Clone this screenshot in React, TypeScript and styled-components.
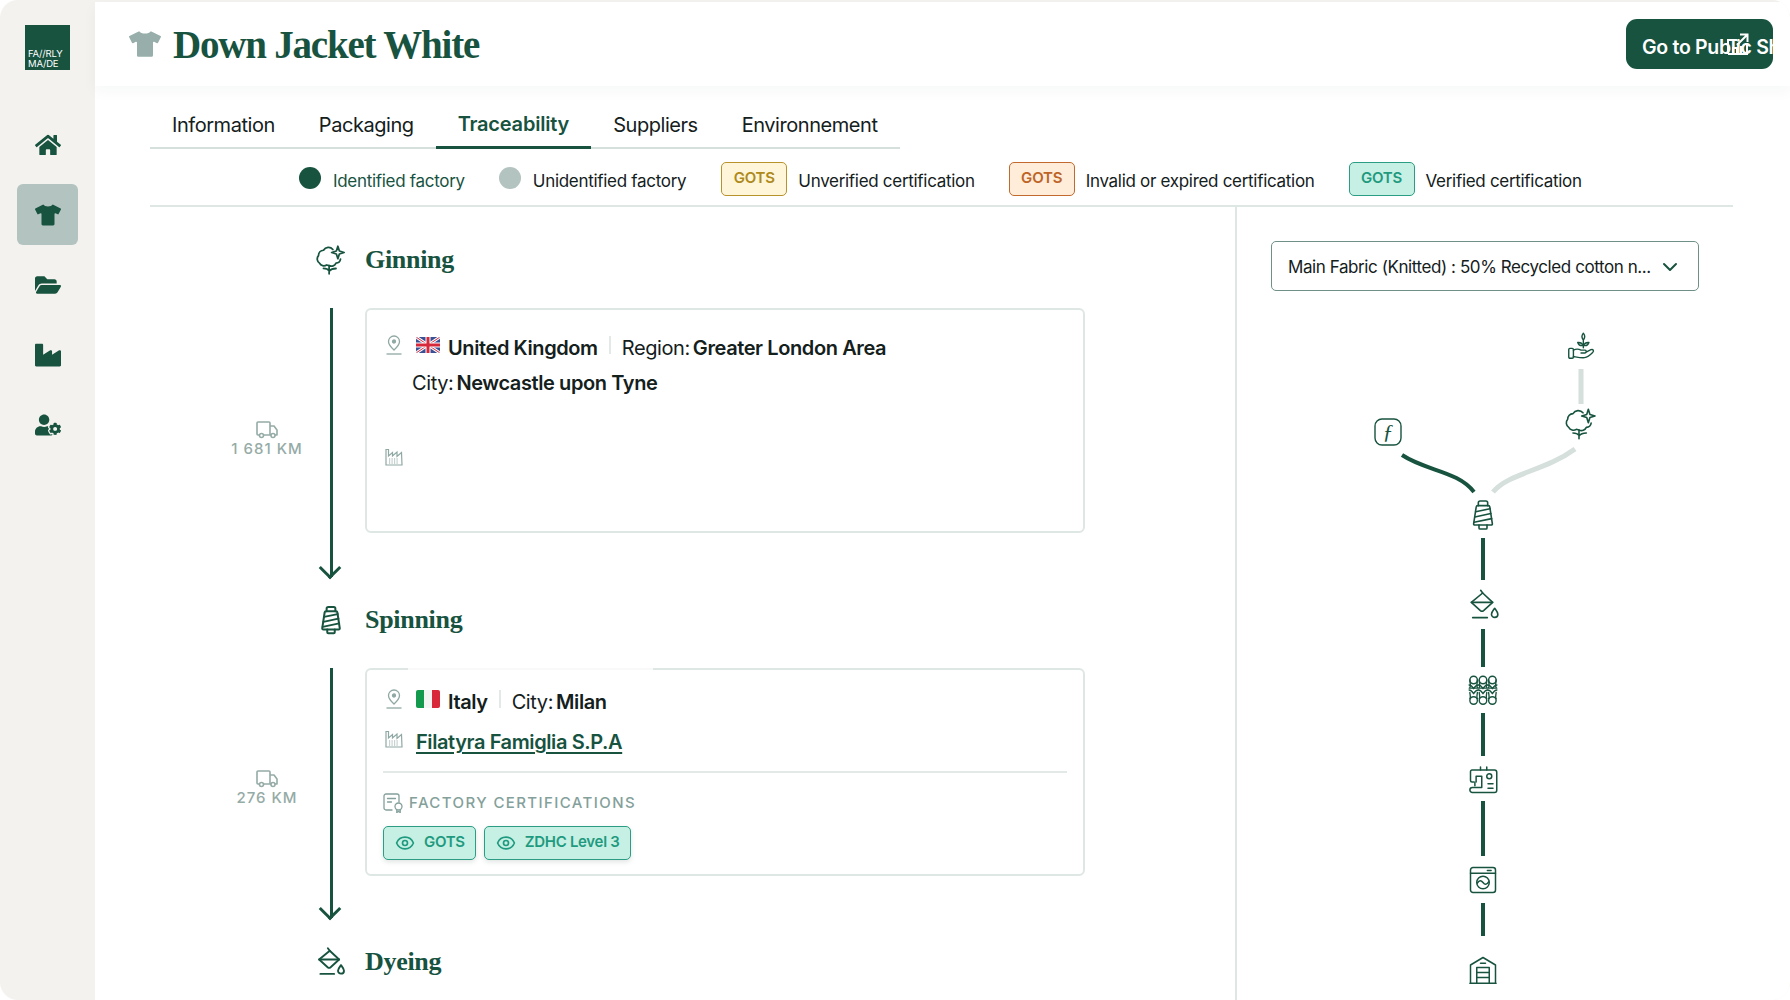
import { ReactNode } from "react";
import styled, { createGlobalStyle } from "styled-components";
import { FaFolderOpen, FaHome, FaIndustry, FaTshirt, FaUserCog } from "react-icons/fa";
import { ChevronDown, Eye } from "lucide-react";

const GREEN = "#17533f";
const SANS = `Inter, "Liberation Sans", sans-serif`;
const SERIF = `"Liberation Serif", serif`;

const GlobalStyle = createGlobalStyle`
	html, body {
		margin: 0;
		height: 100%;
		background: white;
		overflow: hidden;
	}
	body {
		font-family: ${SANS};
		color: #14201c;
	}
`;

const Page = styled.div`
	width: 1790px;
	height: 1000px;
	display: flex;
	background: #f3f2ef;
	border-radius: 18px;
	overflow: hidden;
`;

const Sidebar = styled.nav`
	width: 95px;
	flex-shrink: 0;
	display: flex;
	flex-direction: column;
	align-items: center;
	padding-top: 25px;
`;

const Logo = styled.div`
	width: 45px;
	height: 45px;
	margin-bottom: 44px;
	box-sizing: border-box;
	padding: 0 0 2px 3px;
	background: ${GREEN};
	color: white;
	font-size: 9.5px;
	line-height: 9.5px;
	letter-spacing: -0.2px;
	display: flex;
	flex-direction: column;
	justify-content: flex-end;
`;

const NavItem = styled.div<{ $active?: boolean }>`
	width: 61px;
	height: 61px;
	margin-bottom: 9px;
	display: flex;
	align-items: center;
	justify-content: center;
	border-radius: 6px;
	color: ${GREEN};
	font-size: 26px;
	background: ${(p) => (p.$active ? "#b2c3c0" : "transparent")};
`;

const Main = styled.main`
	flex: 1;
	min-width: 0;
	margin-top: 2px;
	background: white;
	display: flex;
	flex-direction: column;
`;

const Header = styled.header`
	height: 84px;
	flex-shrink: 0;
	display: flex;
	align-items: center;
	padding: 0 17px 0 34px;
	box-shadow: 0 5px 14px rgba(30, 50, 45, 0.04);
`;

const TitleIcon = styled.span`
	color: #97aeaa;
	font-size: 32px;
	display: flex;
	margin-right: 12px;
`;

const Title = styled.h1`
	margin: 0;
	font-family: ${SERIF};
	font-size: 39px;
	font-weight: 700;
	letter-spacing: -1.2px;
	color: ${GREEN};
`;

const PublicButton = styled.button`
	position: relative;
	margin-left: auto;
	width: 147px;
	height: 50px;
	padding: 6px 0 0 16px;
	border: 0;
	border-radius: 11px;
	background: ${GREEN};
	color: white;
	font-family: ${SANS};
	font-size: 19.5px;
	font-weight: 600;
	letter-spacing: -0.3px;
	text-align: left;
	white-space: nowrap;
	overflow: hidden;
`;

const ButtonIcon = styled.svg`
	position: absolute;
	left: 100px;
	top: 13px;
`;

const Body = styled.div`
	flex: 1;
	min-height: 0;
	padding: 0 57px 0 55px;
	display: flex;
	flex-direction: column;
`;

const Tabs = styled.div`
	width: 750px;
	height: 63px;
	box-sizing: border-box;
	display: flex;
	border-bottom: 2px solid #d5dfdc;
`;

const Tab = styled.div<{ $active?: boolean }>`
	height: 63px;
	box-sizing: border-box;
	padding: 15px 22px 0;
	display: flex;
	align-items: center;
	font-size: 20px;
	letter-spacing: ${(p) => (p.$active ? "-0.2px" : "-0.45px")};
	font-weight: ${(p) => (p.$active ? 600 : 400)};
	color: ${(p) => (p.$active ? GREEN : "#14201c")};
	border-bottom: ${(p) => (p.$active ? `3px solid ${GREEN}` : "0")};
`;

const Legend = styled.div`
	height: 58px;
	box-sizing: border-box;
	padding: 7px 0 0 149px;
	display: flex;
	align-items: center;
	border-bottom: 2px solid #dfe7e5;
	font-size: 17px;
	letter-spacing: -0.3px;
`;

const LegendDot = styled.span<{ $color: string }>`
	width: 22px;
	height: 22px;
	border-radius: 50%;
	margin-right: 12px;
	margin-top: -5px;
	background: ${(p) => p.$color};
`;

const LegendLabel = styled.span<{ $green?: boolean; $gap: number }>`
	margin-right: ${(p) => p.$gap}px;
	color: ${(p) => (p.$green ? GREEN : "#14201c")};
`;

const badgeColors = {
	yellow: { bg: "#fff6d9", border: "#b8922b", text: "#ae8a1c" },
	orange: { bg: "#ffecd9", border: "#c26a2e", text: "#bd6426" },
	green: { bg: "#c6f0e4", border: "#2a9d84", text: "#1f9a7f" },
};

const Badge = styled.span<{ $tone: keyof typeof badgeColors }>`
	width: 66px;
	height: 34px;
	box-sizing: border-box;
	margin-right: 11px;
	margin-top: -4px;
	display: flex;
	align-items: center;
	justify-content: center;
	gap: 9px;
	padding-bottom: 3px;
	border: 1.5px solid ${(p) => badgeColors[p.$tone].border};
	border-radius: 5px;
	background: ${(p) => badgeColors[p.$tone].bg};
	color: ${(p) => badgeColors[p.$tone].text};
	font-size: 15px;
	font-weight: 600;
	letter-spacing: -0.2px;
`;

const Content = styled.div`
	flex: 1;
	min-height: 0;
	display: flex;
	overflow: hidden;
`;

const Steps = styled.section`
	width: 1087px;
	flex-shrink: 0;
	box-sizing: border-box;
	border-right: 2px solid #dfe7e5;
	padding-top: 35px;
`;

const StepHeading = styled.div`
	height: 36px;
	margin-bottom: 30px;
	display: grid;
	grid-template-columns: 166px 30px 1fr;
	align-items: center;
	color: ${GREEN};
`;

const HeadingIcon = styled.div`
	grid-column: 2;
	display: flex;
	justify-content: center;
`;

const HeadingText = styled.h2`
	grid-column: 3;
	margin: 0 0 0 19px;
	font-family: ${SERIF};
	font-size: 26px;
	font-weight: 700;
	letter-spacing: -0.3px;
`;

const StepRow = styled.div<{ $bottom: number }>`
	display: grid;
	grid-template-columns: 166px 30px 739px;
	margin-bottom: ${(p) => p.$bottom}px;
`;

const Distance = styled.div<{ $lift: number }>`
	align-self: center;
	justify-self: end;
	width: 98px;
	margin-bottom: ${(p) => p.$lift}px;
	display: flex;
	flex-direction: column;
	align-items: center;
	color: #95aba6;
	font-size: 15px;
	font-weight: 500;
	letter-spacing: 1px;
	white-space: nowrap;
`;

const FlowLine = styled.div`
	position: relative;
	width: 3px;
	justify-self: center;
	background: ${GREEN};
	&::after {
		content: "";
		position: absolute;
		left: -8px;
		bottom: 1px;
		width: 16px;
		height: 16px;
		box-sizing: border-box;
		border-right: 3px solid ${GREEN};
		border-bottom: 3px solid ${GREEN};
		transform: rotate(45deg);
	}
`;

const Card = styled.div<{ $height: number; $top: number; $gap: number }>`
	position: relative;
	height: ${(p) => p.$height}px;
	margin: 0 0 ${(p) => p.$gap}px 19px;
	box-sizing: border-box;
	padding: ${(p) => p.$top}px 16px 0;
	border: 2px solid #dfe7e5;
	border-radius: 6px;
	font-size: 20px;
	letter-spacing: -0.4px;
`;

const BorderFade = styled.span`
	position: absolute;
	left: 41px;
	top: -2px;
	width: 245px;
	height: 2px;
	background: #f8f9f8;
`;

const FieldRow = styled.div<{ $top?: number }>`
	height: 34px;
	margin-top: ${(p) => p.$top ?? 0}px;
	display: flex;
	align-items: center;
`;

const RowIcon = styled.span`
	width: 22px;
	margin-right: 11px;
	margin-top: -6px;
	display: flex;
	justify-content: center;
	color: #8fa8a3;
`;

const Flag = styled.svg`
	margin-right: 8px;
	margin-top: -6px;
	border-radius: 2px;
`;

const Strong = styled.b`
	font-weight: 600;
`;

const FieldValue = styled(Strong)`
	margin-left: 3px;
`;

const Sep = styled.span`
	width: 2px;
	height: 18px;
	margin: -6px 11px 0 11px;
	background: #e3e9e7;
`;

const CityLine = styled(FieldRow)`
	margin-left: 29px;
`;

const FactoryLink = styled.a`
	color: ${GREEN};
	font-weight: 600;
	text-decoration: underline;
	text-underline-offset: 3px;
`;

const Rule = styled.div`
	height: 2px;
	margin: 12px 0 18px;
	background: #e3e9e7;
`;

const CertTitle = styled.div`
	height: 22px;
	display: flex;
	align-items: center;
	gap: 5px;
	color: #84a09a;
	font-size: 15px;
	font-weight: 500;
	letter-spacing: 1.4px;
`;

const Chips = styled.div`
	display: flex;
	gap: 8px;
	margin-top: 13px;
`;

const Chip = styled(Badge)`
	width: auto;
	margin: 0;
	padding: 0 10px 3px 11px;
	letter-spacing: -0.3px;
	box-shadow: 0 2px 5px rgba(30, 70, 60, 0.14);
`;

const ChipEye = styled(Eye)`
	margin-top: 3px;
`;

const Panel = styled.aside`
	flex: 1;
	min-width: 0;
	padding: 34px 0 0 34px;
`;

const Select = styled.div`
	width: 428px;
	height: 50px;
	box-sizing: border-box;
	padding: 2px 16px 0;
	display: flex;
	align-items: center;
	justify-content: space-between;
	border: 1.5px solid #6f8f89;
	border-radius: 5px;
	font-size: 17px;
	letter-spacing: -0.42px;
	white-space: nowrap;
	color: #14201c;
`;

const Diagram = styled.svg`
	display: block;
	margin: 29px 0 0 74px;
`;

type IconProps = { size?: number; x?: number; y?: number; sw?: number };

/* every line icon is drawn on the same 24 box so heading + diagram can share it */
const LineIcon = ({ size = 28, x, y, sw = 1.2, children }: IconProps & { children: ReactNode }) => (
	<svg x={x} y={y} width={size} height={size} viewBox="0 0 24 24" fill="none" stroke={GREEN} strokeWidth={sw} strokeLinecap="round" strokeLinejoin="round">
		{children}
	</svg>
);

const CottonIcon = (p: IconProps) => (
	<LineIcon {...p}>
		<path d="M13.500 3.600A4.600 4.600 0 0 0 6 4.200a4.300 4.300 0 0 0-4 4.300 4 4 0 0 0 .8 6A4 4 0 0 0 8.500 16l2 .5a4 4 0 0 0 5.500-2 3.800 3.800 0 0 0 3.600-3.200" />
		<path d="M17.500 1l1.200 3.800 3.800 1.200-3.800 1.200-1.200 3.800-1.200-3.800-3.800-1.200 3.800-1.200z" />
		<path d="M10.500 16.500V23M10.500 20.500c-1-1.300-3-1.800-4.500-1.800M10.500 21c1.200-1.500 3-2.200 5.500-2.200" />
	</LineIcon>
);

const SpoolIcon = (p: IconProps) => (
	<LineIcon {...p}>
		<path d="M8.500 5V2.800c0-.7.5-1.300 1.300-1.300h4.400c.8 0 1.300.6 1.300 1.300V5" />
		<path d="M8 5h8c.6 0 1 .4 1.100 1L19 18.500c.1.600-.3 1-.8 1H5.800c-.5 0-.9-.4-.8-1L6.900 6c.1-.6.500-1 1.100-1z" />
		<path d="M6.500 9.500l10.800-2.200M5.900 13.500l12-2.600M5.300 17.500l13.200-2.800" />
		<path d="M9 19.500v2.200c0 .5.400.8.800.8h4.400c.4 0 .8-.3.800-.8v-2.200" />
	</LineIcon>
);

const DyeIcon = (p: IconProps) => (
	<LineIcon {...p}>
		<path d="M9.500 1l1.500 2" />
		<path d="M2.500 10L11 3l7.500 7-6.800 6.200c-.7.6-1.700.6-2.400 0z" />
		<path d="M2.500 10h16" />
		<path d="M3.500 21.500h11" />
		<path d="M20 14.500c-1.400 1.900-2.400 3-2.400 4.400a2.400 2.400 0 0 0 4.800 0c0-1.400-1-2.500-2.400-4.400z" />
	</LineIcon>
);

const KnitIcon = (p: IconProps) => (
	<LineIcon {...p} sw={1.1}>
		{[4.5, 12, 19.5].map((cx) => (
			<g key={cx}>
				<circle cx={cx} cy={4} r={3} />
				<path d={`M${cx - 3} 4c0 3 1 4 0 6M${cx + 3} 4c0 3-1 4 0 6`} />
				<path d={`M${cx - 3.6} 8c1.6 0 2.6 1.4 3.6 3 1-1.6 2-3 3.6-3`} />
				<path d={`M${cx - 3.6} 12c1.6 0 2.6 1.4 3.6 3 1-1.6 2-3 3.6-3`} />
				<path d={`M${cx - 3} 14c0 2 1 3 0 5M${cx + 3} 14c0 2-1 3 0 5`} />
				<circle cx={cx} cy={20.4} r={3} />
			</g>
		))}
		<path d="M1 10.500h22" />
	</LineIcon>
);

const SewingIcon = (p: IconProps) => (
	<LineIcon {...p}>
		<path d="M10 1.500V4M15 1.500V4" />
		<path d="M4.500 13.500H3.200c-.7 0-1.200-.5-1.200-1.200V5.200C2 4.500 2.500 4 3.200 4h18c1 0 1.800.8 1.800 1.800v14.400c0 1-.8 1.800-1.800 1.800H3.500a2 2 0 0 1 0-4H11V9H6.500v4.500" />
		<path d="M5.500 13.500v3" />
		<circle cx="17" cy="9" r="2" />
		<path d="M16 15h4M16 18.500h4" />
	</LineIcon>
);

const WashIcon = (p: IconProps) => (
	<LineIcon {...p}>
		<rect x="2" y="2" width="20" height="20" rx="2" />
		<path d="M2 6.500h20M15.500 4.300h3" />
		<circle cx="12" cy="14" r="5" />
		<path d="M7.500 14.500c1.500-2.500 3-2.500 4.500-.5s3 2 4.500-.5" />
	</LineIcon>
);

const WarehouseIcon = (p: IconProps) => (
	<LineIcon {...p}>
		<path d="M2 22.500V8l10-6 10 6v14.500zM1.500 22.500h21" />
		<path d="M7 22.500V10h10v12.500M7 14h10M7 18h10M10 6.500h4" />
	</LineIcon>
);

const PlantIcon = (p: IconProps) => (
	<LineIcon {...p}>
		<path d="M14 1c-1.500 1.800-1.500 4 0 6 1.500-2 1.500-4.200 0-6zM14 7v6.500" />
		<path d="M14 11.500c-1-1.800-2.800-2.800-4.800-2.500.6 1.900 2.500 3 4.800 2.500zM14 11.500c1-1.800 2.800-2.800 4.800-2.500-.6 1.900-2.500 3-4.800 2.500z" />
		<rect x="1.500" y="14" width="4" height="8.500" rx="1" />
		<path d="M5.500 15.500c2.500-1.200 4.500-1 6.500 0h3.500c1.300 0 1.300 2.500 0 2.500H12M16 17.500l4.500-2.300c1.800-.8 3 1 1.500 2.300-2 2-4.500 4-7 4.500-3 .3-6.500-.5-9.500-1" />
	</LineIcon>
);

const PinIcon = () => (
	<svg width="18" height="20" viewBox="0 0 18 20" fill="none" stroke="currentColor" strokeWidth="1.300">
		<path d="M9 1a5.500 5.500 0 0 0-5.500 5.500C3.500 10 9 15 9 15s5.500-5 5.500-8.500A5.500 5.500 0 0 0 9 1z" />
		<circle cx="9" cy="6.500" r="1.500" fill="currentColor" />
		<path d="M1.500 19h15" />
	</svg>
);

const FactoryIcon = () => (
	<svg width="18" height="18" viewBox="0 0 18 18" fill="none" stroke="currentColor" strokeWidth="1.200">
		<path d="M1 17V1.500h2.500V8l4-3.500V8l4.500-4v4.500L16.500 4.500 17 17z" />
		<path d="M4 11h10M4 13h10M4 15h10" strokeDasharray="1.200 1.300" />
	</svg>
);

const CertIcon = () => (
	<svg width="21" height="21" viewBox="0 0 21 21" fill="none" stroke="#84a09a" strokeWidth="1.300" strokeLinecap="round">
		<path d="M9 18H3a2 2 0 0 1-2-2V4a2 2 0 0 1 2-2h11a2 2 0 0 1 2 2v6" />
		<path d="M4.500 6.500h8M4.500 10h4" />
		<circle cx="15.500" cy="14.500" r="3.500" />
		<path d="M13.800 17.500V20.500l1.700-1 1.700 1v-3" />
	</svg>
);

/* boxy van from the reference, lucide's truck is too low */
const VanIcon = () => (
	<svg width="22" height="18" viewBox="0 0 22 18" fill="none" stroke="currentColor" strokeWidth="1.600" strokeLinejoin="round">
		<path d="M3 14H2a1 1 0 0 1-1-1V2a1 1 0 0 1 1-1h11a1 1 0 0 1 1 1v12H8" />
		<path d="M14 5h4l3 4v5h-2M14 14h1" />
		<circle cx="5.500" cy="14.500" r="2" />
		<circle cx="17" cy="14.500" r="2" />
	</svg>
);

const UkFlag = () => (
	<Flag width="24" height="16" viewBox="0 0 24 16">
		<rect width="24" height="16" fill="#3b4f93" />
		<path d="M0 0l24 16M24 0L0 16" stroke="white" strokeWidth="3" />
		<path d="M0 0l24 16M24 0L0 16" stroke="#d5283a" strokeWidth="1" />
		<path d="M12 0v16M0 8h24" stroke="white" strokeWidth="5" />
		<path d="M12 0v16M0 8h24" stroke="#d5283a" strokeWidth="3" />
	</Flag>
);

const ItalyFlag = () => (
	<Flag width="24" height="18" viewBox="0 0 24 18">
		<rect width="8" height="18" fill="#149a4c" />
		<rect x="8" width="8" height="18" fill="#f4f5f3" />
		<rect x="16" width="8" height="18" fill="#d8283a" />
	</Flag>
);

const Distances = ({ km, lift }: { km: string; lift: number }) => (
	<Distance $lift={lift}>
		<VanIcon />
		{km}
	</Distance>
);

const TraceDiagram = () => (
	<Diagram width="280" height="680" viewBox="1345 320 280 680">
		<g fill="none" stroke="#d5dfdc" strokeWidth="5">
			<path d="M1581 369v35" />
			<path d="M1575 449c-30 22-66 24-82 43" />
		</g>
		<g fill="none" stroke={GREEN} strokeWidth="4">
			<path d="M1402 455c24 16 56 16 72 37" />
			<path d="M1483 538v42M1483 629v38M1483 713v43M1483 801v55M1483 903v33" />
		</g>
		<PlantIcon x={1567} y={332} size={28} />
		<CottonIcon x={1565} y={408} size={32} />
		<rect x="1375" y="419" width="26" height="26" rx="7" fill="none" stroke={GREEN} strokeWidth="1.400" />
		<text x="1388" y="439" textAnchor="middle" fontFamily={SERIF} fontStyle="italic" fontSize="22" fill={GREEN}>ƒ</text>
		<SpoolIcon x={1467} y={499} size={32} />
		<DyeIcon x={1468} y={589} size={32} />
		<KnitIcon x={1468} y={675} size={30} />
		<SewingIcon x={1468} y={765} size={30} />
		<WashIcon x={1468} y={865} size={30} />
		<WarehouseIcon x={1468} y={955} size={30} />
	</Diagram>
);

const tabs = ["Information", "Packaging", "Traceability", "Suppliers", "Environnement"];

const App = () => {
	return <>
		<GlobalStyle />
		<Page>
			<Sidebar>
				<Logo>
					<span>FA//RLY</span>
					<span>MA/DE</span>
				</Logo>
				<NavItem><FaHome /></NavItem>
				<NavItem $active><FaTshirt /></NavItem>
				<NavItem><FaFolderOpen /></NavItem>
				<NavItem><FaIndustry /></NavItem>
				<NavItem><FaUserCog /></NavItem>
			</Sidebar>
			<Main>
				<Header>
					<TitleIcon><FaTshirt /></TitleIcon>
					<Title>Down Jacket White</Title>
					<PublicButton>
						Go to Public Sheet
						<ButtonIcon width="24" height="24" viewBox="0 0 24 24" fill="none" stroke="white" strokeWidth="2">
							<path d="M2 22V8h9M22 22H2M7 22v-6h4v6M15 22V14M21 11V22" />
							<path d="M11 13L21 3M14 2.500h7.500V10" />
						</ButtonIcon>
					</PublicButton>
				</Header>
				<Body>
					<Tabs>
						{tabs.map((tab) => <Tab key={tab} $active={tab === "Traceability"}>{tab}</Tab>)}
					</Tabs>
					<Legend>
						<LegendDot $color={GREEN} />
						<LegendLabel $green $gap={34}>Identified factory</LegendLabel>
						<LegendDot $color="#b2c3c0" />
						<LegendLabel $gap={35}>Unidentified factory</LegendLabel>
						<Badge $tone="yellow">GOTS</Badge>
						<LegendLabel $gap={34}>Unverified certification</LegendLabel>
						<Badge $tone="orange">GOTS</Badge>
						<LegendLabel $gap={34}>Invalid or expired certification</LegendLabel>
						<Badge $tone="green">GOTS</Badge>
						<LegendLabel $gap={0}>Verified certification</LegendLabel>
					</Legend>
					<Content>
						<Steps>
							<StepHeading>
								<HeadingIcon><CottonIcon size={34} sw={1.400} /></HeadingIcon>
								<HeadingText>Ginning</HeadingText>
							</StepHeading>
							<StepRow $bottom={25}>
								<Distances km="1 681 KM" lift={7} />
								<FlowLine />
								<Card $height={225} $top={21} $gap={44}>
									<FieldRow>
										<RowIcon><PinIcon /></RowIcon>
										<UkFlag />
										<Strong>United Kingdom</Strong>
										<Sep />
										Region:<FieldValue>Greater London Area</FieldValue>
									</FieldRow>
									<CityLine $top={1}>City:<FieldValue>Newcastle upon Tyne</FieldValue></CityLine>
									<FieldRow $top={43}>
										<RowIcon><FactoryIcon /></RowIcon>
									</FieldRow>
								</Card>
							</StepRow>
							<StepHeading>
								<HeadingIcon><SpoolIcon size={32} sw={1.600} /></HeadingIcon>
								<HeadingText>Spinning</HeadingText>
							</StepHeading>
							<StepRow $bottom={26}>
								<Distances km="276 KM" lift={9} />
								<FlowLine />
								<Card $height={208} $top={15} $gap={42}>
									<BorderFade />
									<FieldRow>
										<RowIcon><PinIcon /></RowIcon>
										<ItalyFlag />
										<Strong>Italy</Strong>
										<Sep />
										City:<FieldValue>Milan</FieldValue>
									</FieldRow>
									<FieldRow $top={6}>
										<RowIcon><FactoryIcon /></RowIcon>
										<FactoryLink>Filatyra Famiglia S.P.A</FactoryLink>
									</FieldRow>
									<Rule />
									<CertTitle><CertIcon />FACTORY CERTIFICATIONS</CertTitle>
									<Chips>
										<Chip $tone="green"><ChipEye size={20} />GOTS</Chip>
										<Chip $tone="green"><ChipEye size={20} />ZDHC Level 3</Chip>
									</Chips>
								</Card>
							</StepRow>
							<StepHeading>
								<HeadingIcon><DyeIcon size={32} sw={1.500} /></HeadingIcon>
								<HeadingText>Dyeing</HeadingText>
							</StepHeading>
						</Steps>
						<Panel>
							<Select>
								Main Fabric (Knitted) : 50% Recycled cotton n...
								<ChevronDown size={24} color={GREEN} />
							</Select>
							<TraceDiagram />
						</Panel>
					</Content>
				</Body>
			</Main>
		</Page>
	</>;
}

export default App;
